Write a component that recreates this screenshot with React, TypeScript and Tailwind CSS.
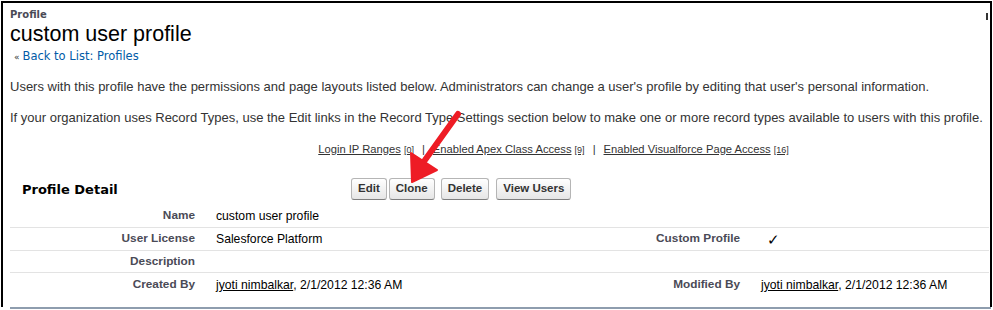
import React from "react";

const Btn = ({ children }: { children: React.ReactNode }) => (
  <button className="h-[22px] px-[6px] border border-[#b5b5b5] border-b-[#7f7f7f] rounded-[3px] bg-gradient-to-b from-white to-[#e6e6e6] text-[11.5px] font-bold text-[#333] leading-none">
    {children}
  </button>
);

export default function App() {
  const label = "text-right pr-[21px] text-[11.8px] font-bold text-[#4a4a56]";
  const rlabel = "text-right text-[11.8px] font-bold text-[#4a4a56]";
  const val = "text-[12.2px] text-[#000]";
  return (
    <div
      className="relative w-[993px] h-[310px] bg-white overflow-hidden"
      style={{ fontFamily: "'Liberation Sans', Arial, sans-serif" }}
    >
      <div className="absolute border-t-2 border-l-2 border-r-2 border-black pointer-events-none" style={{ top: 1, left: 1, right: 1, bottom: 3 }} />
      <div className="absolute right-[5px] top-[13px] w-[2px] h-[7px] bg-[#333]" />
      <div className="pl-[10px] pt-[8px]">
        <div className="font-bold text-[#4a4a56] leading-[14px]" style={{ fontFamily: "'DejaVu Sans', Verdana, sans-serif", fontSize: 10 }}>Profile</div>
        <div className="text-[21.5px] text-black leading-[22px] mt-[1px]">custom user profile</div>
        <div className="mt-[4px] pl-[4px] text-[#015ba7] leading-[14px]" style={{ fontFamily: "'DejaVu Sans', Verdana, sans-serif", fontSize: 11.5 }}>
          <span className="text-[9px] text-[#333] mr-[3px]">«</span>Back to List: Profiles
        </div>
        <p className="mt-[15px] text-[13px] text-[#333] leading-[16px]">
          Users with this profile have the permissions and page layouts listed below. Administrators can change a user's profile by editing that user's personal information.
        </p>
        <p className="mt-[15px] text-[13px] text-[#333] leading-[16px]">
          If your organization uses Record Types, use the Edit links in the Record Type Settings section below to make one or more record types available to users with this profile.
        </p>
        <div className="mt-[16px] flex justify-center gap-[8px] text-[11.2px] text-[#333] leading-[14px] pl-[104px]">
          <span><span className="underline">Login IP Ranges</span> <span className="underline text-[9px]">[0]</span></span>
          <span>|</span>
          <span><span className="underline">Enabled Apex Class Access</span> <span className="underline text-[9px]">[9]</span></span>
          <span>|</span>
          <span><span className="underline">Enabled Visualforce Page Access</span> <span className="underline text-[9px]">[16]</span></span>
        </div>
      </div>
      <div className="ml-[10px] mt-[21px] mr-[4px]">
        <div className="flex items-center h-[22px]">
          <div className="w-[341px] pl-[12px] pt-[2px] text-[13px] font-bold text-black" style={{ fontFamily: "'DejaVu Sans', Verdana, sans-serif" }}>Profile Detail</div>
          <div className="flex">
            <Btn>Edit</Btn>
            <div className="w-[2px]" />
            <Btn>Clone</Btn>
            <div className="w-[6px]" />
            <Btn>Delete</Btn>
            <div className="w-[7px]" />
            <Btn>View Users</Btn>
          </div>
        </div>
        <div className="mt-[5px]">
          <div className="grid grid-cols-[206px_545px_1fr] items-center h-[23px] border-b border-[#e3e3e3]">
            <div className={label}>Name</div>
            <div className={val}>custom user profile</div>
            <div />
          </div>
          <div className="grid grid-cols-[206px_545px_1fr] items-center h-[23px] border-b border-[#e3e3e3]">
            <div className={label}>User License</div>
            <div className="grid grid-cols-[1fr_auto] pr-[21px]">
              <div className={val}>Salesforce Platform</div>
              <div className={rlabel}>Custom Profile</div>
            </div>
            <div className="pl-[6px] text-[15px] leading-none">✓</div>
          </div>
          <div className="grid grid-cols-[206px_545px_1fr] items-center h-[22px] border-b border-[#e3e3e3]">
            <div className={label}>Description</div>
            <div />
            <div />
          </div>
          <div className="grid grid-cols-[206px_545px_1fr] items-center h-[24px]">
            <div className={label}>Created By</div>
            <div className="grid grid-cols-[1fr_auto] pr-[21px]">
              <div className={val}><span className="underline">jyoti nimbalkar</span>, 2/1/2012 12:36 AM</div>
              <div className={rlabel}>Modified By</div>
            </div>
            <div className={val}><span className="underline">jyoti nimbalkar</span>, 2/1/2012 12:36 AM</div>
          </div>
        </div>
      </div>
      <div className="absolute left-[10px] right-[2px] bottom-[1px] h-[2px] bg-[#8e9dae]" />
      <svg className="absolute left-0 top-0 pointer-events-none" width="993" height="310">
        <line x1="458" y1="114" x2="425" y2="160" stroke="#ee1c25" strokeWidth="6" strokeLinecap="round" />
        <polygon points="412,182 411,153 437,170" fill="#ee1c25" stroke="#ee1c25" strokeWidth="2" strokeLinejoin="round" />
      </svg>
    </div>
  );
}
